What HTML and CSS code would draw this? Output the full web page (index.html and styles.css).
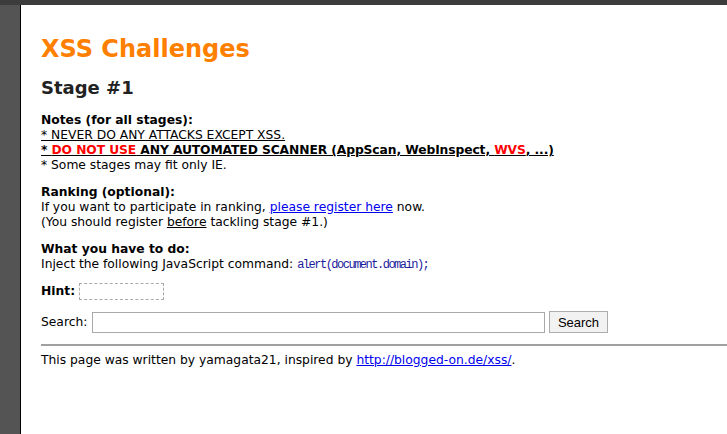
FILE: index.html
```html
<!DOCTYPE html>
<html>
<head>
<meta charset="utf-8">
<link rel="stylesheet" href="styles.css">
</head>
<body>
<div class="topbar"></div>
<div class="frame">
  <div class="gutter"></div>
  <div class="page">
    <h1 class="title">XSS Challenges</h1>
    <h2 class="stage">Stage #1</h2>
    <div class="block first">
      <div class="label">Notes (for all stages):</div>
      <div class="u">* NEVER DO ANY ATTACKS EXCEPT XSS.</div>
      <div class="u strong">* <span class="red">DO NOT USE</span> ANY AUTOMATED SCANNER (AppScan, WebInspect, <span class="red">WVS</span>, ...)</div>
      <div>* Some stages may fit only IE.</div>
    </div>
    <div class="block">
      <div class="label">Ranking (optional):</div>
      <div>If you want to participate in ranking, <a class="link" href="#">please register here</a> now.</div>
      <div>(You should register <span class="u">before</span> tackling stage #1.)</div>
    </div>
    <div class="block">
      <div class="label">What you have to do:</div>
      <div>Inject the following JavaScript command: <code class="code">alert(document.domain);</code></div>
    </div>
    <div class="hint-row">
      <span class="label">Hint:</span>
      <span class="hint-box"></span>
    </div>
    <form class="search-row">
      <label class="search-label">Search:</label>
      <input class="search-input" type="text">
      <button class="search-btn" type="button">Search</button>
    </form>
    <hr class="rule">
    <div class="footer">This page was written by yamagata21, inspired by <a class="link" href="#">http://blogged-on.de/xss/</a>.</div>
  </div>
</div>
</body>
</html>
```

FILE: styles.css
```css
html, body {
  margin: 0;
  padding: 0;
  height: 100%;
  overflow: hidden;
}
body {
  background: #545454;
  font-family: "DejaVu Sans", Verdana, sans-serif;
  font-size: 12.3px;
  line-height: 15px;
  color: #000;
}
.topbar {
  height: 5px;
  background: #3c3c3c;
}
.frame {
  display: flex;
  height: calc(100% - 5px);
}
.gutter {
  width: 20px;
  flex: none;
  background: #545454;
}
.page {
  flex: 1;
  background: #fff;
  border-left: 1px solid #000;
  padding: 0 0 0 20px;
}
.title {
  margin: 28px 0 0;
  font-size: 24px;
  line-height: 32px;
  color: #ff7f00;
  font-weight: bold;
}
.stage {
  margin: 11px 0 0;
  font-size: 18px;
  line-height: 24px;
  color: #222;
  font-weight: bold;
}
.block {
  margin-top: 12px;
}
.block.first {
  margin-top: 13px;
}
.label {
  font-weight: bold;
}
.u {
  text-decoration: underline;
}
.strong {
  font-weight: bold;
  letter-spacing: -0.1px;
}
.red {
  color: #ff0000;
}
.link {
  color: #0000ee;
  text-decoration: underline;
}
.code {
  font-family: "Liberation Mono", monospace;
  font-size: 12px;
  letter-spacing: -1.5px;
  color: #1c1c9c;
}
.hint-row {
  margin-top: 10px;
  display: flex;
  align-items: center;
  gap: 4px;
}
.hint-box {
  display: inline-block;
  width: 83px;
  height: 15px;
  border: 1px dashed #aaa;
}
.search-row {
  margin: 11px 0 0;
  display: flex;
  align-items: center;
}
.search-label {
  width: 51px;
}
.search-input {
  width: 451px;
  height: 19px;
  padding: 0;
  margin: 0;
  border: 1px solid #a9a9a9;
  box-sizing: content-box;
}
.search-btn {
  margin: 0 0 0 4px;
  height: 22px;
  width: 59px;
  padding: 0;
  font-family: "Liberation Sans", Arial, sans-serif;
  font-size: 13px;
  background: #f2f2f2;
  border: 1px solid #adadad;
  border-radius: 0;
  color: #000;
}
.rule {
  margin: 11px 0 0;
  border: 0;
  border-top: 2px solid #a0a0a0;
  height: 0;
}
.footer {
  margin-top: 7px;
}
```
